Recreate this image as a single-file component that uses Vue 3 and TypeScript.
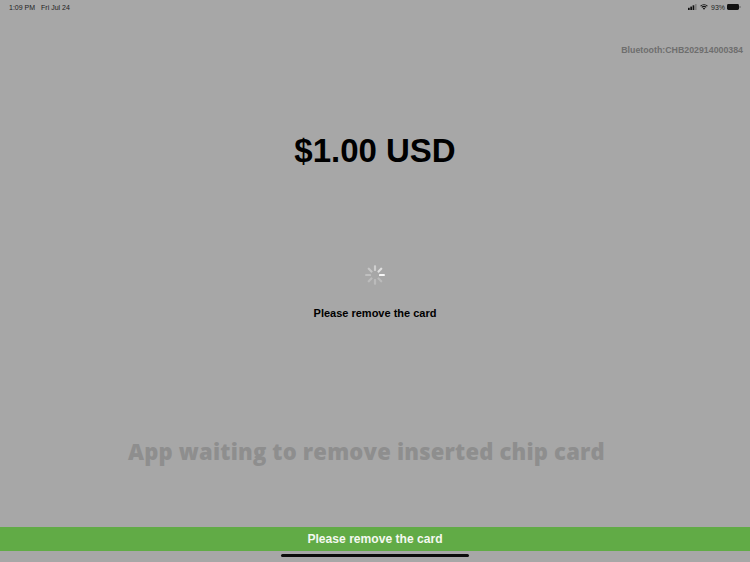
<script setup lang="ts">
const spokes = [0, 1, 2, 3, 4, 5, 6, 7].map((i) => ({
  angle: -i * 45,
  opacity: [1, 0.7, 0.5, 0.4, 0.32, 0.28, 0.25, 0.25][i],
}));
</script>

<template>
  <div class="page">
    <div class="status">
      <div class="status-left">
        <span>1:09 PM</span>
        <span>Fri Jul 24</span>
      </div>
      <div class="status-right">
        <svg width="9" height="6" viewBox="0 0 9 6">
          <rect x="0" y="3.8" width="1.7" height="2.2" fill="#111" />
          <rect x="2.3" y="2.6" width="1.7" height="3.4" fill="#111" />
          <rect x="4.6" y="1.3" width="1.7" height="4.7" fill="#111" />
          <rect x="6.9" y="0" width="1.7" height="6" fill="#808080" />
        </svg>
        <svg width="8" height="6" viewBox="0 0 18 14">
          <path d="M1 5a11.5 11.5 0 0 1 16 0M3.8 8a7.5 7.5 0 0 1 10.4 0" fill="none" stroke="#111" stroke-width="2.4" />
          <path d="M6.3 10.4a3.6 3.6 0 0 1 5.4 0L9 13.5z" fill="#111" />
        </svg>
        <span>93%</span>
        <svg class="battery" width="14" height="6" viewBox="0 0 14 6">
          <rect x="0" y="0" width="12" height="6" rx="1.4" fill="#111" />
          <rect x="12.5" y="2" width="1" height="2" fill="#666" />
        </svg>
      </div>
    </div>
    <div class="bluetooth">Bluetooth:CHB202914000384</div>
    <div class="amount">$1.00 USD</div>
    <svg class="spinner" width="20" height="20" viewBox="-10 -10 20 20">
      <rect
        v-for="s in spokes"
        :key="s.angle"
        x="4"
        y="-1.1"
        width="5.8"
        height="2.2"
        rx="0.7"
        fill="#f6f6f6"
        :opacity="s.opacity"
        :transform="`rotate(${s.angle})`"
      />
    </svg>
    <div class="message">Please remove the card</div>
    <div class="watermark">App waiting to remove inserted chip card</div>
    <div class="banner">Please remove the card</div>
    <div class="home"></div>
  </div>
</template>

<style scoped>
.page {
  width: 750px;
  height: 562px;
  background: #a7a7a7;
  display: flex;
  flex-direction: column;
  overflow: hidden;
  font-family: "Liberation Sans", Arial, sans-serif;
  color: #000;
}
.status {
  height: 14px;
  padding: 0 9px;
  display: flex;
  justify-content: space-between;
  align-items: center;
  font-size: 7px;
  color: #222;
}
.status-left {
  display: flex;
  gap: 6px;
}
.status-right {
  display: flex;
  align-items: center;
  gap: 3px;
}
.battery {
  margin-left: -1px;
}
.bluetooth {
  margin-top: 30px;
  padding-right: 7px;
  text-align: right;
  font-size: 8.8px;
  line-height: 13px;
  font-weight: 700;
  color: #6e6e6e;
}
.amount {
  margin-top: 73px;
  height: 42px;
  line-height: 42px;
  text-align: center;
  font-size: 33px;
  font-weight: 700;
}
.spinner {
  margin: 93px 0 0 364.5px;
  display: block;
}
.message {
  margin-top: 20px;
  height: 16px;
  line-height: 16px;
  text-align: center;
  font-size: 11px;
  font-weight: 700;
}
.watermark {
  margin-top: 113px;
  padding-right: 17px;
  height: 34px;
  line-height: 34px;
  text-align: center;
  font-family: "Open Sans", sans-serif;
  font-size: 22px;
  font-weight: 800;
  letter-spacing: 0.2px;
  color: #8e8e8e;
  white-space: nowrap;
}
.banner {
  margin-top: 59px;
  height: 24px;
  line-height: 24px;
  background: #61ab46;
  color: #f4f8f0;
  text-align: center;
  font-size: 12.1px;
  font-weight: 700;
}
.home {
  width: 188px;
  height: 3px;
  margin: 3px auto 0;
  background: #0c0c0c;
  border-radius: 2px;
}
</style>

<style>
html,
body {
  margin: 0;
  background: #a7a7a7;
}
</style>
